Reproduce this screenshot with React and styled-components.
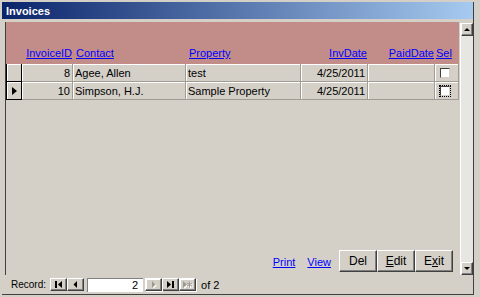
import React from 'react';
import styled, { createGlobalStyle, css } from 'styled-components';

const GlobalStyle = createGlobalStyle`
	body {
		margin: 0;
		font-family: "Liberation Sans", Arial, sans-serif;
		font-size: 11px;
		background: #d4d0c8;
	}
`;

const raised = css`
	border-top: 1px solid #ffffff;
	border-left: 1px solid #ffffff;
	border-right: 1px solid #404040;
	border-bottom: 1px solid #404040;
	box-shadow: inset -1px -1px 0 #808080;
`;

const Window = styled.div`
	width: 480px;
	height: 297px;
	box-sizing: border-box;
	padding: 2px 0 2px 2px;
	background: #d4d0c8;
	display: flex;
	flex-direction: column;
	overflow: hidden;
`;

const Inner = styled.div`
	flex: 1;
	display: flex;
	flex-direction: column;
	margin-right: 6px;
	border-right: 1px solid #404040;
	min-height: 0;
`;

const TitleBar = styled.div`
	height: 17px;
	flex-shrink: 0;
	display: flex;
	align-items: center;
	padding-left: 4px;
	background: linear-gradient(to right, #0a246a, #a6caf0);
	color: #ffffff;
	font-weight: bold;
	font-size: 11px;
`;

const Body = styled.div`
	flex: 1;
	display: flex;
	margin: 3px 0 0 3px;
	border-left: 1px solid #404040;
	min-height: 0;
`;

const FormArea = styled.div`
	flex: 1;
	display: flex;
	flex-direction: column;
`;

const cols = '16px 51px 113px 115px 67px 67px 1fr';

const Header = styled.div`
	height: 42px;
	background: #c28d89;
	display: grid;
	grid-template-columns: ${cols};
	align-items: end;
	padding-bottom: 5px;
	box-sizing: border-box;
`;

const HeadLink = styled.a`
	color: #0000ff;
	text-decoration: underline;
	text-align: ${(p) => (p.$right ? 'right' : 'left')};
	padding: ${(p) => (p.$right ? '0 1px 0 0' : `0 0 0 ${p.$pad ?? 3}px`)};
	grid-column: ${(p) => p.$col};
	white-space: nowrap;
`;

const Row = styled.div`
	height: 18px;
	display: grid;
	grid-template-columns: ${cols};
`;

const Selector = styled.div`
	border-left: 1px solid #000000;
	border-right: 1px solid #000000;
	border-bottom: 1px solid #000000;
	box-shadow: inset 1px 1px 0 #ffffff;
	display: flex;
	align-items: center;
	justify-content: center;
`;

const Pointer = styled.span`
	width: 0;
	height: 0;
	border-top: 4px solid transparent;
	border-bottom: 4px solid transparent;
	border-left: 5px solid #000000;
`;

const Cell = styled.div`
	border-right: 1px solid #a09c94;
	border-bottom: 1px solid #a09c94;
	box-shadow: inset 1px 1px 0 #ffffff;
	display: flex;
	align-items: center;
	justify-content: ${(p) => (p.$right ? 'flex-end' : 'flex-start')};
	padding: 0 2px 0 2px;
	color: #000000;
	font-size: 11px;
	white-space: nowrap;
	overflow: hidden;
`;

const Check = styled.span`
	width: 8px;
	height: 8px;
	background: #ffffff;
	border: 1px solid #404040;
	border-right-color: #d4d0c8;
	border-bottom-color: #d4d0c8;
	outline: ${(p) => (p.$focus ? '1px dotted #000' : 'none')};
	margin-left: 3px;
`;

const Spacer = styled.div`
	flex: 1;
`;

const Footer = styled.div`
	display: flex;
	align-items: center;
	justify-content: flex-end;
	padding: 0 6px 3px 0;
`;

const Link = styled.a`
	color: #0000ff;
	text-decoration: underline;
	font-size: 11px;
	margin-right: ${(p) => p.$gap || 0}px;
	padding-top: 2px;
`;

const Button = styled.button`
	${raised};
	width: 38px;
	height: 22px;
	background: #d4d0c8;
	font-family: "Liberation Sans", Arial, sans-serif;
	font-size: 12px;
	color: #000000;
	padding: 0;
	u {
		text-decoration: underline;
	}
`;

const ScrollBar = styled.div`
	width: 12px;
	display: flex;
	flex-direction: column;
	justify-content: space-between;
	margin-left: 1px;
	background: #e8e6e2;
	border-left: 1px solid #ffffff;
	margin-top: 1px;
`;

const ScrollButton = styled.div`
	${raised};
	height: 11px;
	background: #d4d0c8;
	display: flex;
	align-items: center;
	justify-content: center;
`;

const Tri = styled.span`
	width: 0;
	height: 0;
	border-left: 3px solid transparent;
	border-right: 3px solid transparent;
	${(p) => (p.$down ? 'border-top: 3px solid #000;' : 'border-bottom: 3px solid #000;')}
`;

const NavBar = styled.div`
	height: 19px;
	flex-shrink: 0;
	display: flex;
	align-items: center;
	padding-left: 9px;
	border-bottom: 1px solid #404040;
	font-size: 10px;
	color: #000000;
`;

const NavLabel = styled.span`
	margin-right: 4px;
`;

const NavButton = styled.div`
	${raised};
	width: 15px;
	height: 11px;
	display: flex;
	align-items: center;
	justify-content: center;
	color: ${(p) => (p.$disabled ? '#9c9890' : '#000')};
	filter: ${(p) => (p.$disabled ? 'drop-shadow(1px 1px 0 #fff)' : 'none')};
`;

const RecordBox = styled.div`
	width: 56px;
	height: 14px;
	margin: 0 2px 0 3px;
	background: #ffffff;
	border-top: 1px solid #808080;
	border-left: 1px solid #808080;
	display: flex;
	align-items: center;
	justify-content: flex-end;
	padding-right: 5px;
	box-sizing: border-box;
	font-size: 11px;
`;

const OfText = styled.span`
	margin-left: 5px;
	font-size: 11px;
`;

const NavGlyph = ({ kind }) => (
	<svg width="9" height="7" viewBox="0 0 9 7">
		{kind === 'first' && (
			<>
				<rect x="1" y="0" width="2" height="7" fill="currentColor" />
				<path d="M8 0 L4 3.5 L8 7 Z" fill="currentColor" />
			</>
		)}
		{kind === 'prev' && <path d="M6 0 L2.5 3.5 L6 7 Z" fill="currentColor" />}
		{kind === 'next' && <path d="M3 0 L6.5 3.5 L3 7 Z" fill="currentColor" />}
		{kind === 'last' && (
			<>
				<path d="M1 0 L5 3.5 L1 7 Z" fill="currentColor" />
				<rect x="6" y="0" width="2" height="7" fill="currentColor" />
			</>
		)}
		{kind === 'new' && (
			<>
				<path d="M0 0 L4 3.5 L0 7 Z" fill="currentColor" />
				<path d="M6.5 0.5 V6.5 M4 2 L9 5 M4 5 L9 2" stroke="currentColor" strokeWidth="1" />
			</>
		)}
	</svg>
);

const rows = [
	{ id: 8, contact: 'Agee, Allen', property: 'test', date: '4/25/2011' },
	{ id: 10, contact: 'Simpson, H.J.', property: 'Sample Property', date: '4/25/2011', current: true },
];

const App = () => (
	<>
		<GlobalStyle />
		<Window>
			<Inner>
				<TitleBar>Invoices</TitleBar>
				<Body>
					<FormArea>
						<Header>
							<HeadLink $col={2} $right>InvoiceID</HeadLink>
							<HeadLink $col={3}>Contact</HeadLink>
							<HeadLink $col={4}>Property</HeadLink>
							<HeadLink $col={5} $right>InvDate</HeadLink>
							<HeadLink $col={6} $right>PaidDate</HeadLink>
							<HeadLink $col={7} $pad={1}>Sel</HeadLink>
						</Header>
						{rows.map((r) => (
							<Row key={r.id}>
								<Selector>{r.current && <Pointer />}</Selector>
								<Cell $right>{r.id}</Cell>
								<Cell>{r.contact}</Cell>
								<Cell>{r.property}</Cell>
								<Cell $right>{r.date}</Cell>
								<Cell />
								<Cell>
									<Check $focus={r.current} />
								</Cell>
							</Row>
						))}
						<Spacer />
						<Footer>
							<Link $gap={12}>Print</Link>
							<Link $gap={8}>View</Link>
							<Button>Del</Button>
							<Button><u>E</u>dit</Button>
							<Button>E<u>x</u>it</Button>
						</Footer>
					</FormArea>
					<ScrollBar>
						<ScrollButton><Tri /></ScrollButton>
						<ScrollButton><Tri $down /></ScrollButton>
					</ScrollBar>
				</Body>
				<NavBar>
					<NavLabel>Record:</NavLabel>
					<NavButton><NavGlyph kind="first" /></NavButton>
					<NavButton><NavGlyph kind="prev" /></NavButton>
					<RecordBox>2</RecordBox>
					<NavButton $disabled><NavGlyph kind="next" /></NavButton>
					<NavButton><NavGlyph kind="last" /></NavButton>
					<NavButton $disabled><NavGlyph kind="new" /></NavButton>
					<OfText>of 2</OfText>
				</NavBar>
			</Inner>
		</Window>
	</>
);

export default App;
